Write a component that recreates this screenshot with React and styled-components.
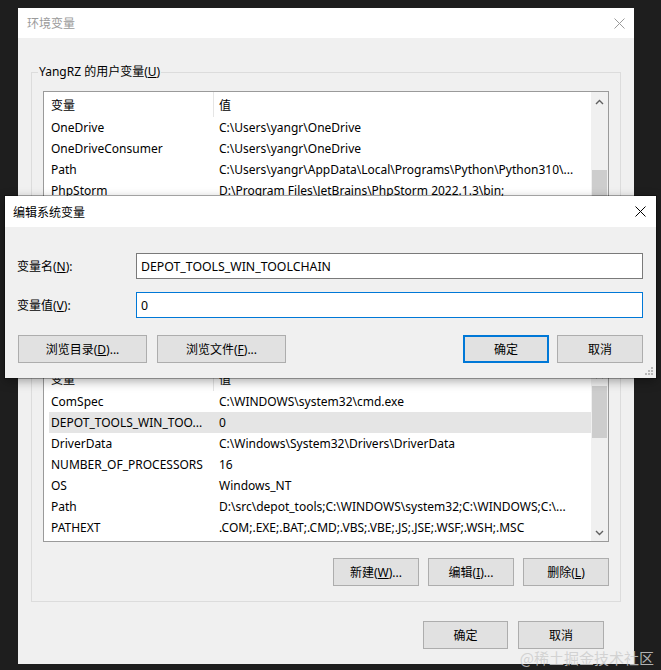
import React from 'react';
import styled, { createGlobalStyle } from 'styled-components';

const GlobalStyle = createGlobalStyle`
  html, body {
    margin: 0;
    background: #1e1e1e;
    overflow: hidden;
  }
  body {
    font-family: 'Noto Sans', 'Noto Sans CJK SC', sans-serif;
    font-size: 12px;
    color: #000000;
  }
`;

const Page = styled.div`
  position: relative;
  width: 661px;
  height: 670px;
  box-sizing: border-box;
  padding: 8px 0 0 18px;
`;

const Window = styled.div`
  width: 616px;
  height: 656px;
  background: #f0f0f0;
  display: flex;
  flex-direction: column;
`;

const TitleBar = styled.div`
  height: ${p => p.$h}px;
  flex-shrink: 0;
  background: #ffffff;
  display: flex;
  align-items: center;
  justify-content: space-between;
  padding: 0 ${p => p.$right}px 0 ${p => p.$left}px;
  color: ${p => (p.$inactive ? '#9a9a9a' : '#000000')};
  font-size: 12px;
`;

const Body = styled.div`
  display: flex;
  flex-direction: column;
  padding: 0 13px;
`;

const Group = styled.fieldset`
  margin: ${p => p.$top}px 0 0 0;
  min-width: 0;
  border: 1px solid #dcdcdc;
  padding: 11px 11px ${p => p.$bottom}px 11px;
  display: flex;
  flex-direction: column;
`;

const Legend = styled.legend`
  margin-left: -5px;
  padding: 0 1px;
  height: 16px;
  line-height: 16px;
  font-size: 12px;
`;

const ListView = styled.div`
  height: ${p => p.$h}px;
  box-sizing: border-box;
  border: 1px solid #9a9a9a;
  background: #ffffff;
  display: flex;
  overflow: hidden;
`;

const ListContent = styled.div`
  flex: 1;
  min-width: 0;
  display: flex;
  flex-direction: column;
`;

const HeaderRow = styled.div`
  height: 25px;
  flex-shrink: 0;
  display: flex;
  align-items: center;
`;

const HeaderCell = styled.div`
  height: 100%;
  display: flex;
  align-items: center;
  box-sizing: border-box;
  padding-left: ${p => p.$pad}px;
  width: ${p => (p.$w ? `${p.$w}px` : 'auto')};
  flex: ${p => (p.$w ? 'none' : 1)};
  border-right: ${p => (p.$divider ? '1px solid #e5e5e5' : 'none')};
`;

const Row = styled.div`
  height: 21px;
  flex-shrink: 0;
  margin-left: 5px;
  display: flex;
  align-items: center;
  background: ${p => (p.$selected ? '#e5e5e5' : 'transparent')};
  white-space: nowrap;
`;

const NameCell = styled.div`
  width: 164px;
  flex: none;
  padding-left: 2px;
  box-sizing: border-box;
  overflow: hidden;
`;

const ValueCell = styled.div`
  flex: 1;
  padding-left: 6px;
  overflow: hidden;
`;

const ScrollBar = styled.div`
  width: 17px;
  flex: none;
  background: #f0f0f0;
  display: flex;
  flex-direction: column;
`;

const ArrowBox = styled.div`
  height: ${p => p.$h}px;
  flex: none;
  display: flex;
  align-items: center;
  justify-content: center;
`;

const Track = styled.div`
  flex: 1;
  display: flex;
  flex-direction: column;
  align-items: center;
`;

const Thumb = styled.div`
  width: 15px;
  height: ${p => p.$h}px;
  margin-top: ${p => p.$top}px;
  background: #cdcdcd;
`;

const ButtonRow = styled.div`
  display: flex;
  justify-content: ${p => p.$justify || 'flex-end'};
  gap: ${p => p.$gap}px;
  margin-top: ${p => p.$top}px;
  padding-right: ${p => p.$right || 0}px;
  padding-left: ${p => p.$left || 0}px;
`;

const Button = styled.div`
  width: ${p => p.$w}px;
  height: 28px;
  box-sizing: border-box;
  background: #e1e1e1;
  border: ${p => (p.$default ? '2px solid #0078d7' : '1px solid #adadad')};
  display: flex;
  align-items: center;
  justify-content: center;
  font-size: 12px;
  margin-left: ${p => (p.$push ? 'auto' : '0')};
`;

const Dialog = styled.div`
  position: absolute;
  left: 5px;
  top: 196px;
  width: 651px;
  height: 182px;
  background: #f0f0f0;
  display: flex;
  flex-direction: column;
  box-shadow: 0 0 0 1px rgba(0, 0, 0, 0.3), 0 3px 10px rgba(0, 0, 0, 0.35);
`;

const DialogBody = styled.div`
  padding: 26px 13px 0 12px;
  display: flex;
  flex-direction: column;
`;

const Form = styled.div`
  display: grid;
  grid-template-columns: 119px 1fr;
  row-gap: 13px;
  align-items: center;
`;

const FieldLabel = styled.label`
  font-size: 12px;
`;

const TextInput = styled.input`
  height: 26px;
  box-sizing: border-box;
  border: 1px solid ${p => (p.$focused ? '#0078d7' : '#7a7a7a')};
  background: #ffffff;
  padding: 0 4px;
  font-family: 'Noto Sans', 'Noto Sans CJK SC', sans-serif;
  font-size: 12.3px;
  color: #000000;
  outline: none;
  margin: 0;
`;

const Grip = styled.svg`
  position: absolute;
  right: 2px;
  bottom: 2px;
`;

const Watermark = styled.div`
  position: absolute;
  right: 7px;
  bottom: 2px;
  font-size: 15px;
  color: rgba(205, 205, 205, 0.85);
  font-family: 'Noto Sans CJK SC', sans-serif;
`;

const CloseIcon = ({ color }) => (
  <svg width="11" height="11" viewBox="0 0 11 11">
    <path d="M0.5 0.5 L10.5 10.5 M10.5 0.5 L0.5 10.5" stroke={color} strokeWidth="1" fill="none" />
  </svg>
);

const Chevron = ({ down }) => (
  <svg width="9" height="6" viewBox="0 0 9 6">
    <polyline
      points={down ? '1,1 4.5,4.5 8,1' : '1,5 4.5,1.5 8,5'}
      stroke="#606060"
      strokeWidth="1.4"
      fill="none"
    />
  </svg>
);

const userVars = [
  ['OneDrive', 'C:\\Users\\yangr\\OneDrive'],
  ['OneDriveConsumer', 'C:\\Users\\yangr\\OneDrive'],
  ['Path', 'C:\\Users\\yangr\\AppData\\Local\\Programs\\Python\\Python310\\...'],
  ['PhpStorm', 'D:\\Program Files\\JetBrains\\PhpStorm 2022.1.3\\bin;'],
];

const systemVars = [
  ['ComSpec', 'C:\\WINDOWS\\system32\\cmd.exe'],
  ['DEPOT_TOOLS_WIN_TOO...', '0', true],
  ['DriverData', 'C:\\Windows\\System32\\Drivers\\DriverData'],
  ['NUMBER_OF_PROCESSORS', '16'],
  ['OS', 'Windows_NT'],
  ['Path', 'D:\\src\\depot_tools;C:\\WINDOWS\\system32;C:\\WINDOWS;C:\\...'],
  ['PATHEXT', '.COM;.EXE;.BAT;.CMD;.VBS;.VBE;.JS;.JSE;.WSF;.WSH;.MSC'],
];

const VarList = ({ rows, height, thumbTop, thumbHeight }) => (
  <ListView $h={height}>
    <ListContent>
      <HeaderRow>
        <HeaderCell $w={170} $pad={7} $divider>变量</HeaderCell>
        <HeaderCell $pad={5}>值</HeaderCell>
      </HeaderRow>
      {rows.map(([name, value, selected]) => (
        <Row key={name + value} $selected={selected}>
          <NameCell>{name}</NameCell>
          <ValueCell>{value}</ValueCell>
        </Row>
      ))}
    </ListContent>
    <ScrollBar>
      <ArrowBox $h={20}><Chevron /></ArrowBox>
      <Track>
        <Thumb $top={thumbTop} $h={thumbHeight} />
      </Track>
      <ArrowBox $h={17}><Chevron down /></ArrowBox>
    </ScrollBar>
  </ListView>
);

const App = () => (
  <Page>
    <GlobalStyle />
    <Window>
      <TitleBar $h={30} $left={9} $right={9} $inactive>
        <span>环境变量</span>
        <CloseIcon color="#9a9a9a" />
      </TitleBar>
      <Body>
        <Group $top={26} $bottom={48}>
          <Legend>YangRZ 的用户变量(<u>U</u>)</Legend>
          <VarList rows={userVars} height={190} thumbTop={58} thumbHeight={60} />
        </Group>
        {/* 系统变量 group: its caption sits under the edit dialog */}
        <Group $top={8} $bottom={15}>
          <Legend />
          <VarList rows={systemVars} height={177} thumbTop={0} thumbHeight={52} />
          <ButtonRow $gap={9} $top={16}>
            <Button $w={86}>新建(<u>W</u>)...</Button>
            <Button $w={86}>编辑(<u>I</u>)...</Button>
            <Button $w={86}>删除(<u>L</u>)</Button>
          </ButtonRow>
        </Group>
        <ButtonRow $gap={10} $top={19} $right={17}>
          <Button $w={85}>确定</Button>
          <Button $w={86}>取消</Button>
        </ButtonRow>
      </Body>
    </Window>

    <Dialog>
      <TitleBar $h={31} $left={8} $right={10}>
        <span>编辑系统变量</span>
        <CloseIcon color="#000000" />
      </TitleBar>
      <DialogBody>
        <Form>
          <FieldLabel>变量名(<u>N</u>):</FieldLabel>
          <TextInput readOnly value="DEPOT_TOOLS_WIN_TOOLCHAIN" />
          <FieldLabel>变量值(<u>V</u>):</FieldLabel>
          <TextInput readOnly value="0" $focused />
        </Form>
        <ButtonRow $gap={10} $top={17} $left={1} $justify="flex-start">
          <Button $w={129}>浏览目录(<u>D</u>)...</Button>
          <Button $w={129}>浏览文件(<u>F</u>)...</Button>
          <Button $w={86} $default $push>确定</Button>
          <Button $w={86} style={{ marginLeft: -2 }}>取消</Button>
        </ButtonRow>
      </DialogBody>
      <Grip width="10" height="10" viewBox="0 0 10 10">
        {[[8, 2], [5, 5], [8, 5], [2, 8], [5, 8], [8, 8]].map(([x, y]) => (
          <rect key={`${x}-${y}`} x={x - 1} y={y - 1} width="2" height="2" fill="#b8b8b8" />
        ))}
      </Grip>
    </Dialog>

    <Watermark>@稀土掘金技术社区</Watermark>
  </Page>
);

export default App;
